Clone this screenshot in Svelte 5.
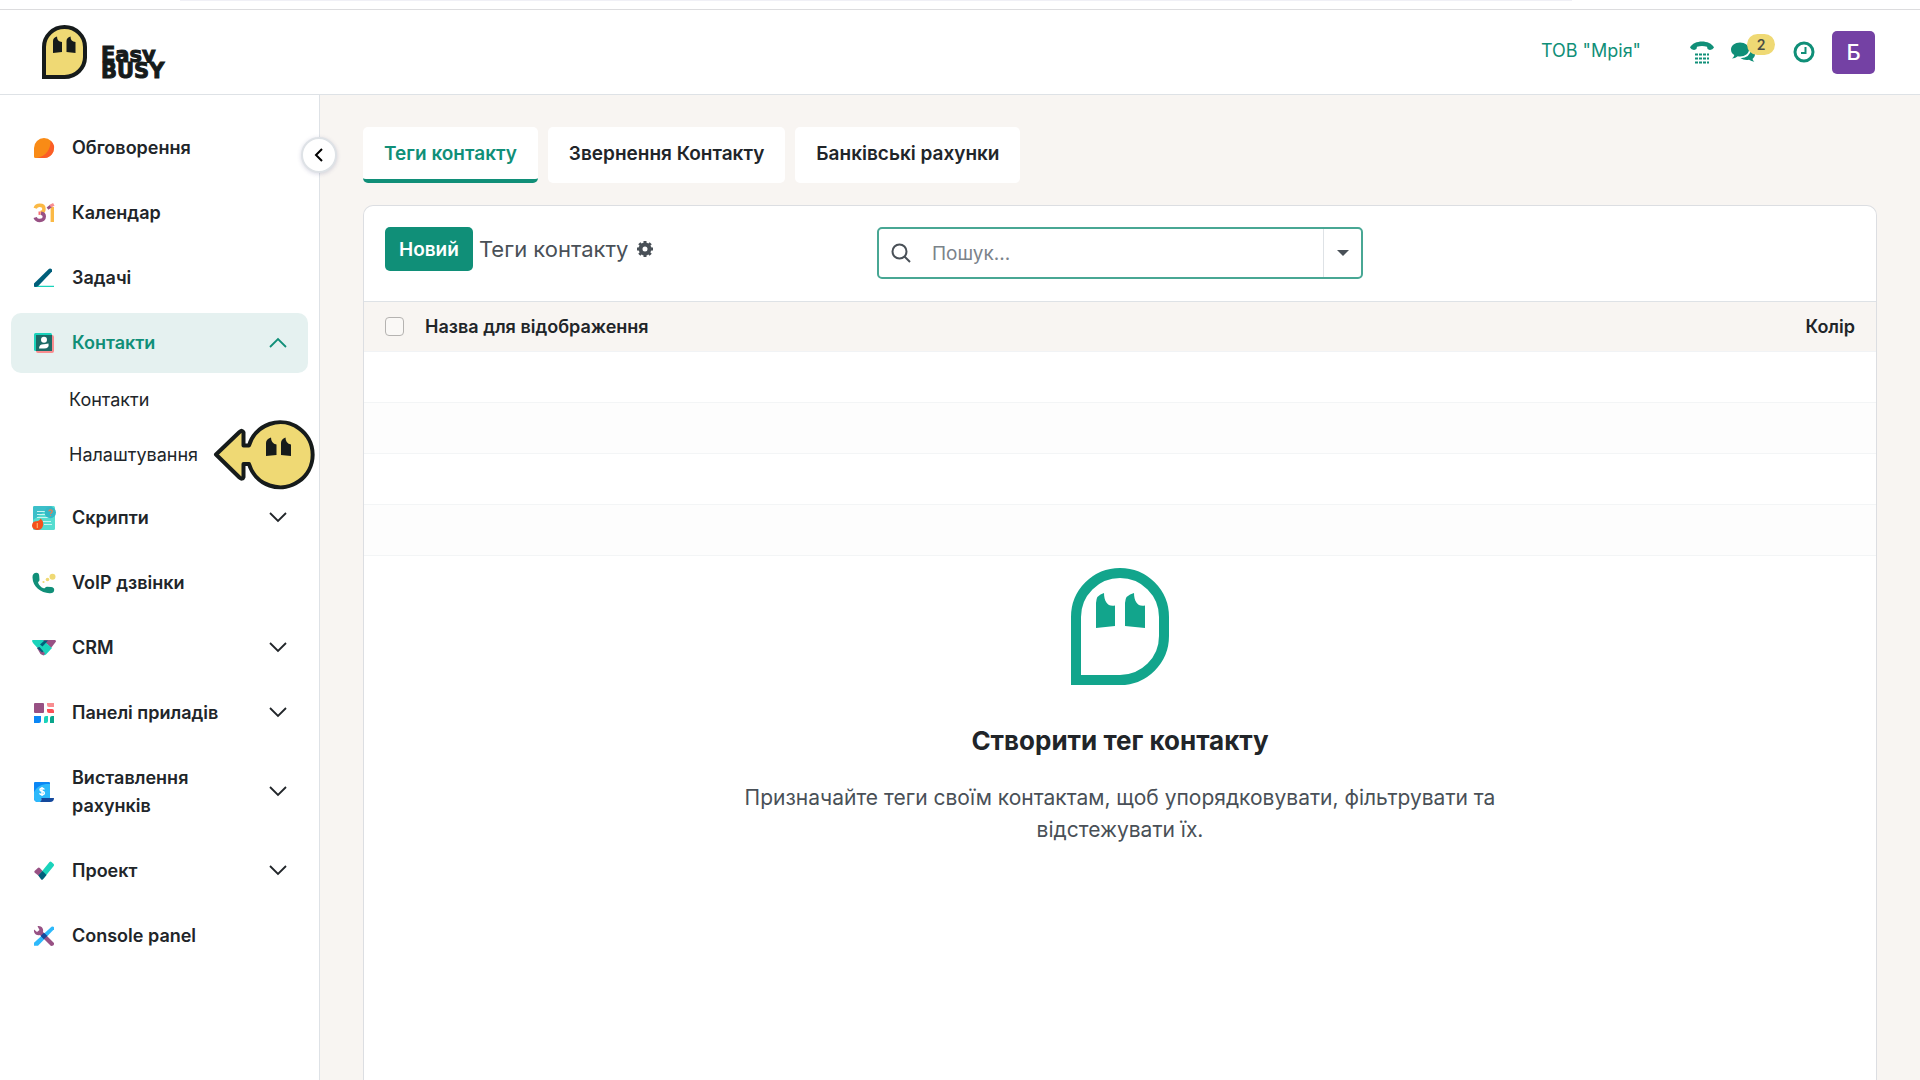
<script>
  let open = $state(true);
  let search = $state("");

  const tabs = ["Теги контакту", "Звернення Контакту", "Банківські рахунки"];
  let activeTab = $state(0);

  const before = [
    { icon: "chat", label: "Обговорення" },
    { icon: "calendar", label: "Календар" },
    { icon: "todo", label: "Задачі" },
  ];

  const after = [
    { icon: "scripts", label: "Скрипти", more: true },
    { icon: "voip", label: "VoIP дзвінки" },
    { icon: "crm", label: "CRM", more: true },
    { icon: "dashboards", label: "Панелі приладів", more: true },
    { icon: "invoices", label: "Виставлення рахунків", more: true },
    { icon: "project", label: "Проект", more: true },
    { icon: "console", label: "Console panel" },
  ];
</script>

{#snippet appIcon(name)}
  <svg class="app-icon" viewBox="0 0 24 24" aria-hidden="true">
    {#if name === "chat"}
      <path d="M2 12a10 10 0 1 1 10 10H3.500Q2 22 2 20.500z" fill="#f98b16" />
      <path d="M18.500 4.400A10 10 0 0 1 12 22H5C14 20 19 13 18.500 4.400z" fill="#fb5d27" />
    {:else if name === "calendar"}
      <g fill="none" stroke-width="3.400">
        <path d="M3.200 7.200C4 4.800 6 4.200 7.700 4.200c2.500 0 4.300 1.400 4.300 3.700 0 2-1.500 3.400-3.500 3.600" stroke="#fbb945" />
        <path d="M6.500 12.200h2" stroke="#f86f70" />
        <path d="M9 12.300c2.200.3 3.300 1.600 3.300 3.300 0 2.400-1.900 3.900-4.500 3.900-2.300 0-4-1-4.700-3" stroke="#985184" />
        <path d="M20.300 6v15" stroke="#fbb945" />
        <path d="M15.500 7.600 19 5" stroke="#985184" stroke-width="3" />
        <path d="M18.300 5.200 21.800 3.400" stroke="#f88d90" stroke-width="3" />
      </g>
    {:else if name === "todo"}
      <path d="M4 19.800h18v1.200H3z" fill="#1ad3bb" />
      <path d="M2 17.500 16.500 3.200q1.700-1.500 3.500.3v2L6 20.300 3.800 21 2 20.700z" fill="#005e7a" />
    {:else if name === "contacts"}
      <rect x="4" y="4" width="18" height="18" rx="2" fill="#f88d90" />
      <rect x="2" y="2" width="18" height="18" rx="1.500" fill="#1ad3bb" />
      <rect x="4" y="4" width="16" height="16" fill="#1b6a66" />
      <circle cx="12" cy="8.700" r="3" fill="#fff" />
      <path d="M7 17.500q0-4.500 5-4.300l4.500-.7q1 5-4.500 5z" fill="#fff" />
    {:else if name === "scripts"}
      <rect x="1" y="0" width="22" height="24" rx="1.500" fill="#55ddd0" />
      <path d="M1 1.500Q1 0 2.500 0h18L1 14z" fill="#3cbfc9" />
      <path d="M5 5.500h8M5 8.500h8M5 11.500h12M11 15.500h8M12 18.500h8" stroke="#c9f5f2" stroke-width="1" />
      <circle cx="18.300" cy="6.500" r="5.700" fill="#35b9c6" />
      <path d="M16.800 5.300q.2-1.500 1.800-1.500t1.700 1.400c0 1.200-1.700 1.300-1.700 2.800M18.500 9v1" fill="none" stroke="#f47b4d" stroke-width="1.200" />
      <path d="M0 19.500c0-3 2.500-4.500 4.500-4.200C6.500 15.300 8 14 8.500 12.500 11 14 11.500 17 11 19.500 10.500 22.500 8 24 5.500 24S0 22.500 0 19.500z" fill="#f4511c" />
      <path d="M5.300 17v5" stroke="#ffb066" stroke-width="1.200" />
    {:else if name === "voip"}
      <path d="M.5 6.500C.3 3.500 2 1.800 4.500 1.800c1.700 0 2.500 1.200 2.700 3L7.500 9c-.1 1.700-1.600 1.600-1.400 2.700.8 2.500 2.900 4.600 5.600 5.600 1.300.3 1.700-1.600 3.300-1.600l4 .4c2.200.2 3.300 1.200 3.200 3-.1 2.600-2 3.400-4.700 3.200C9 21.800.8 16 .5 6.500z" fill="#108f78" />
      <circle cx="20.500" cy="5.700" r="3" fill="#efd974" />
      <circle cx="15.500" cy="8.500" r="1.800" fill="#efd974" />
      <circle cx="11.500" cy="11" r="1.100" fill="#efd974" />
    {:else if name === "crm"}
      <path d="M0 5q0-1 1-1h14v8L5 11.500 1 7z" fill="#1ad3bb" />
      <path d="M11 4h12q1 0 1 1.500L19 12z" fill="#985184" />
      <path d="M5 11.500 14 7l6 5-6 6.500q-2 1.500-4 0z" fill="#1ad3bb" />
      <path d="m5 12 2-1 6 6.500-1.500 2-3-1.500z" fill="#985184" />
      <path d="M8 8.500 12.500 4.500H16l-5.500 6z" fill="#005e7a" />
      <path d="M5.200 12 7.500 11l4 4.500-1.500 1z" fill="#005e7a" />
    {:else if name === "dashboards"}
      <rect x="2" y="2" width="10" height="10" rx="1" fill="#985184" />
      <path d="M15 2h7v4h-5q-2 0-2-2z" fill="#f88d90" />
      <path d="M15 8h5q2 0 2 2v2h-5q-2 0-2-2z" fill="#fc4f57" />
      <path d="M2 15h7v5q0 2-2 2H2z" fill="#0b87f5" />
      <path d="M12 17q0-2 2-2h2v5q0 2-2 2h-2z" fill="#1ad3bb" />
      <path d="M18 17q0-2 2-2h2v7h-4z" fill="#0aa58c" />
    {:else if name === "invoices"}
      <path d="M2 3q0-1 1-1h14q1 0 1 1v16H9l-3 3q-4 0-4-4z" fill="#0b87f5" />
      <path d="M2 12C5 6 11 3.500 18 4v15H9v3H6q-4 0-4-4z" fill="#2db9fb" />
      <path d="M8 22q1.500-1 1.500-4H22q0 4-4 4z" fill="#14489c" />
      <path d="M12.300 9.500q-.5-1.300-2.300-1.300-2 0-2 1.500 0 1.200 2 1.600 2.400.4 2.400 1.800 0 1.600-2.300 1.600-2 0-2.500-1.500M10 7v9" fill="none" stroke="#fff" stroke-width="1.400" />
    {:else if name === "project"}
      <path d="M2.300 12.200 5.800 9q1-.8 2 .1L13.500 15 9.500 19 2.500 13.500z" fill="#985184" />
      <path d="M7 16 17.500 3q1-1 2 0l2.200 2q.8 1 0 2L11.500 19.500 8 18z" fill="#1ad3bb" />
      <path d="m6.300 16.500 4.200-4.500 4 4-3.500 4.300q-1 1-2 0z" fill="#005e7a" />
    {:else if name === "console"}
      <path d="M19.500 2.800q1.500-1 2.500.5v2L6 21.800H2v-3z" fill="#2db9fb" />
      <path d="M2 5.500 5 8 7.500 6 5.500 2.200C9 1.300 12 4.500 11 8L22 19q.5 3-3 3L8 11c-4 1-6.500-2-6-5.500z" fill="#985184" />
      <path d="m12 8.700 3.300 3.400-3.400 3.200L8.600 12z" fill="#14489c" />
    {/if}
  </svg>
{/snippet}

{#snippet chevron(up)}
  <svg class="chevron" viewBox="0 0 18 12" aria-hidden="true">
    <path d={up ? "M1 10 9 2l8 8" : "M1 1l8 8 8-8"} />
  </svg>
{/snippet}

<div class="page">
  <div class="strip"><span></span></div>

  <header>
    <a class="logo" href="/" aria-label="Easy BUSY">
      <svg viewBox="0 0 45 54" aria-hidden="true">
        <path d="M2 22a20.500 20 0 0 1 41 0v9.500a20.500 20 0 0 1-20.500 20.500H2z" fill="#efd974" stroke="#161b1b" stroke-width="4" />
        <path d="M11 28V16q0-3.500 4-4.500 0 5 5 5.500v10zM24.500 27V16q0-3.500 4-4.500 0 5 5 5.500v11z" fill="#161b1b" />
      </svg>
      <span class="wordmark"><span>Easy</span><span>BUSY</span></span>
    </a>

    <nav class="systray" aria-label="Користувач">
      <a class="company" href="#company">ТОВ "Мрія"</a>
      <button class="phone" aria-label="Телефон">
        <svg width="26" height="24" viewBox="0 0 26 24">
          <path d="M1 7.500C3 3.500 8 1.500 13 1.500S23 3.500 25 7.500q-1.500 2.800-5 2.300-2-.5-2-3Q13 5 8 6.800q0 2.500-2 3Q2.500 10.300 1 7.500z" />
          <path d="M6 14.500h14M6 18.500h14M6 22.500h14" class="keys" />
        </svg>
      </button>
      <button class="messages" aria-label="Повідомлення">
        <svg width="26" height="22" viewBox="0 0 26 22">
          <path d="M10 1.500c5 0 9 3 9 7s-4 7-9 7q-1 0-2.200-.2Q5 17.500 2 17.500q2-1.500 2.300-3.500Q1 12 1 8.500c0-4 4-7 9-7z" />
          <path d="M21 8q4 2.500 4 6-.5 2.500-2.500 4 .5 1.500 1.800 2.800-3-.3-5.300-2-5 .8-8.500-1.600Q20 17 21 8z" />
        </svg>
        <span class="badge">2</span>
      </button>
      <button class="clock" aria-label="Активності">
        <svg width="22" height="22" viewBox="0 0 22 22">
          <circle cx="11" cy="11" r="9" />
          <path d="M12.500 6v6H8" />
        </svg>
      </button>
      <button class="avatar">Б</button>
    </nav>
  </header>

  <div class="body">
    <aside>
      <nav class="menu" aria-label="Головне меню">
        {#each before as item}
          <a class="item" href="#{item.icon}">
            {@render appIcon(item.icon)}
            <span>{item.label}</span>
          </a>
        {/each}

        <button class="item active" aria-expanded={open} onclick={() => (open = !open)}>
          {@render appIcon("contacts")}
          <span>Контакти</span>
          {@render chevron(open)}
        </button>

        {#if open}
          <div class="submenu">
            <a href="#contacts">Контакти</a>
            <a href="#settings">
              Налаштування
              <svg class="pointer" width="102" height="72" viewBox="0 -1 102 72" aria-hidden="true">
                <path
                  d="M4 35.500 27.500 13q3-2.500 4 .5V26.500h5.500a32.500 32.500 0 1 1 0 18.500h-5.500V58q-1 3-4 .5z"
                  fill="#efd974"
                  stroke="#161b1b"
                  stroke-width="4"
                  stroke-linejoin="round"
                />
                <path d="M54 37V24q0-4 5-5.500 0 6 5.500 7v10.500zM69 36V24q0-4 4.500-5.500 0 6 5.500 7v11.500z" fill="#161b1b" />
              </svg>
            </a>
          </div>
        {/if}

        {#each after as item}
          <a class="item" href="#{item.icon}">
            {@render appIcon(item.icon)}
            <span>{item.label}</span>
            {#if item.more}{@render chevron(false)}{/if}
          </a>
        {/each}
      </nav>

      <button class="collapse" aria-label="Згорнути меню">
        <svg width="10" height="16" viewBox="0 0 10 16"><path d="M8 2 2 8l6 6" /></svg>
      </button>
    </aside>

    <main>
      <div class="tabs" role="tablist">
        {#each tabs as tab, i}
          <button role="tab" aria-selected={activeTab === i} class:selected={activeTab === i} onclick={() => (activeTab = i)}>
            {tab}
          </button>
        {/each}
      </div>

      <section class="card">
        <div class="toolbar">
          <div class="crumbs">
            <button class="primary">Новий</button>
            <span>Теги контакту</span>
            <button class="gear" aria-label="Дії">
              <svg width="16" height="16" viewBox="0 0 16 16">
                <circle cx="8" cy="8" r="4.500" />
                <path d="M8 0v3M8 13v3M0 8h3M13 8h3M2.300 2.300l2.200 2.200M11.500 11.500l2.200 2.200M2.300 13.700l2.200-2.200M11.500 4.500l2.200-2.200" />
              </svg>
            </button>
          </div>

          <div class="search">
            <svg width="20" height="20" viewBox="0 0 20 20" aria-hidden="true">
              <circle cx="8.500" cy="8.500" r="7" />
              <path d="m13.500 13.500 5.500 5.500" />
            </svg>
            <input type="text" placeholder="Пошук..." aria-label="Пошук" bind:value={search} />
            <button aria-label="Фільтри">
              <svg width="12" height="6" viewBox="0 0 12 6"><path d="M0 0h12L6 6z" /></svg>
            </button>
          </div>
        </div>

        <table>
          <thead>
            <tr>
              <th class="check"><input type="checkbox" aria-label="Вибрати всі" /></th>
              <th>Назва для відображення</th>
              <th class="color">Колір</th>
            </tr>
          </thead>
          <tbody>
            {#each Array(4) as _}
              <tr><td colspan="3"></td></tr>
            {/each}
          </tbody>
        </table>

        <div class="empty">
          <svg width="98" height="117" viewBox="0 0 98 117" aria-hidden="true">
            <path d="M5 49a44 44 0 0 1 88 0v19a44 44 0 0 1-44 44H5z" fill="none" stroke="#12a58c" stroke-width="10" />
            <path
              d="M25 60V35q0-8 8-10c0 9 4 14 11 12.500V58zM54 58V35q0-8 9-10c0 9 4 14 11 12.500V60z"
              fill="#12a58c"
            />
          </svg>
          <h2>Створити тег контакту</h2>
          <p>Призначайте теги своїм контактам, щоб упорядковувати, фільтрувати та відстежувати їх.</p>
        </div>
      </section>
    </main>
  </div>
</div>

<style>
  :global(body) {
    margin: 0;
    background: #f8f5f2;
  }

  .page {
    display: flex;
    flex-direction: column;
    height: 100vh;
    overflow: hidden;
    font-family: Inter, "Noto Sans", sans-serif;
    font-size: 18px;
    color: #212529;
  }

  .page * {
    box-sizing: border-box;
  }

  button {
    font: inherit;
    color: inherit;
    background: none;
    border: none;
    padding: 0;
    cursor: pointer;
  }

  a {
    color: inherit;
    text-decoration: none;
  }

  svg {
    display: block;
    flex: none;
  }

  .strip {
    flex: none;
    height: 10px;
    padding: 0 348px 0 180px;
    background: #fff;
    border-bottom: 1px solid #dcdcde;
  }

  .strip span {
    display: block;
    height: 1px;
    background: #f0f0f6;
  }

  header {
    flex: none;
    display: flex;
    align-items: center;
    justify-content: space-between;
    height: 85px;
    padding: 0 45px 0 42px;
    background: #fff;
    border-bottom: 1px solid #dee2e6;
  }

  .logo {
    display: flex;
    align-items: flex-end;
    gap: 14px;
  }

  .logo svg {
    width: 45px;
    height: 54px;
  }

  .wordmark {
    font: 700 21px/16px "DejaVu Sans", Inter, sans-serif;
    color: #161b1b;
    -webkit-text-stroke: 1px #161b1b;
  }

  .wordmark span {
    display: block;
  }

  /* the second line sits over the descender of the first */
  .wordmark span + span {
    position: relative;
    background: #fff;
  }

  .systray {
    display: flex;
    align-items: center;
    color: #108f78;
    fill: #108f78;
  }

  .company {
    margin-right: 48px;
    padding-bottom: 4px;
  }

  .phone {
    margin-right: 15px;
  }

  .keys {
    fill: none;
    stroke: #108f78;
    stroke-width: 2;
    stroke-dasharray: 3 1;
  }

  .messages {
    position: relative;
    margin-right: 37px;
  }

  .badge {
    position: absolute;
    top: -7px;
    left: 17px;
    width: 28px;
    border-radius: 11px;
    background: #efd974;
    color: #4a4d45;
    font-size: 14px;
    font-weight: 600;
    line-height: 21px;
  }

  .clock {
    margin-right: 17px;
  }

  .clock svg {
    fill: none;
    stroke: #108f78;
    stroke-width: 3;
  }

  .clock path {
    stroke-width: 2;
  }

  .avatar {
    width: 43px;
    height: 43px;
    border-radius: 5px;
    background: #7441a4;
    color: #fff;
    font-size: 22px;
    font-weight: 500;
  }

  .body {
    flex: 1;
    display: flex;
    min-height: 0;
  }

  aside {
    position: relative;
    flex: none;
    width: 320px;
    padding: 23px 11px;
    background: #fff;
    border-right: 1px solid #dee2e6;
  }

  .menu {
    display: flex;
    flex-direction: column;
    gap: 5px;
  }

  .item {
    display: flex;
    align-items: center;
    gap: 16px;
    min-height: 60px;
    padding: 16px 21px;
    border-radius: 10px;
    font-weight: 600;
    line-height: 28px;
    text-align: left;
  }

  .item span {
    flex: 1;
  }

  .item.active {
    background: #e5f1f0;
    color: #108f78;
  }

  .app-icon {
    width: 24px;
    height: 24px;
  }

  .chevron {
    width: 18px;
    height: 12px;
    fill: none;
    stroke: currentColor;
    stroke-width: 1.8;
  }

  .submenu {
    display: flex;
    flex-direction: column;
    gap: 9px;
    margin-top: -2px;
    padding-bottom: 6px;
  }

  .submenu a {
    display: flex;
    align-items: center;
    gap: 14px;
    height: 46px;
    padding-left: 58px;
  }

  .pointer {
    overflow: visible;
    margin-right: -16px;
  }

  .collapse {
    position: absolute;
    top: 42px;
    right: -18px;
    display: grid;
    place-items: center;
    width: 36px;
    height: 36px;
    border: 2px solid #dee2e6;
    border-radius: 50%;
    background: #fff;
    box-shadow: 0 1px 4px rgba(60, 60, 120, 0.2);
  }

  .collapse path {
    fill: none;
    stroke: #000;
    stroke-width: 2;
  }

  main {
    flex: 1;
    display: flex;
    flex-direction: column;
    min-width: 0;
    padding: 32px 43px 0;
  }

  .tabs {
    display: flex;
    gap: 10px;
    margin-bottom: 22px;
  }

  .tabs button {
    height: 56px;
    padding: 0 21px;
    border-bottom: 4px solid transparent;
    border-radius: 5px;
    background: #fff;
    font-size: 19px;
    font-weight: 600;
  }

  .tabs .selected {
    border-bottom-color: #108f78;
    color: #108f78;
  }

  .card {
    flex: 1;
    border: 1px solid #dcdee2;
    border-bottom: none;
    border-radius: 10px 10px 0 0;
    background: #fff;
  }

  .toolbar {
    display: grid;
    grid-template-columns: 1fr 486px 1fr;
    align-items: start;
    padding: 21px 21px 22px;
    border-bottom: 1px solid #dee2e6;
  }

  .crumbs {
    display: flex;
    align-items: center;
    gap: 6px;
    font-size: 22px;
    color: #495057;
  }

  .primary {
    height: 44px;
    padding: 0 14px;
    border-radius: 5px;
    background: #108f78;
    color: #fff;
    font-size: 19px;
    font-weight: 600;
  }

  .gear {
    margin-left: 3px;
  }

  .gear svg {
    fill: none;
    stroke: #495057;
    stroke-width: 4;
  }

  .gear path {
    stroke-width: 3;
  }

  .search {
    display: flex;
    align-items: center;
    height: 52px;
    padding-left: 12px;
    border: 2px solid #48a794;
    border-radius: 5px;
  }

  .search > svg {
    fill: none;
    stroke: #495057;
    stroke-width: 2;
  }

  .search input {
    flex: 1;
    min-width: 0;
    padding: 0 21px;
    border: none;
    outline: none;
    background: none;
    font: inherit;
    font-size: 19px;
    color: inherit;
  }

  .search input::placeholder {
    color: #7b838a;
  }

  .search button {
    display: grid;
    place-items: center;
    align-self: stretch;
    width: 38px;
    border-left: 1px solid #dee2e6;
    fill: #495057;
  }

  table {
    width: 100%;
    border-collapse: separate;
    border-spacing: 0;
  }

  th {
    height: 50px;
    padding: 0;
    background: #f8f5f2;
    border-bottom: 1px solid #f1f3f5;
    font-weight: 600;
    text-align: left;
  }

  .check {
    width: 61px;
    padding-left: 21px;
  }

  .check input {
    display: block;
    appearance: none;
    width: 19px;
    height: 19px;
    margin: 0;
    border: 1px solid #b5b3b1;
    border-radius: 4px;
    background: #faf8f6;
  }

  .color {
    padding-right: 21px;
    text-align: right;
  }

  td {
    height: 51px;
    padding: 0;
    border-bottom: 1px solid #f3f5f6;
  }

  tbody tr:nth-child(even) td {
    background: #fdfdfd;
  }

  .empty {
    display: flex;
    flex-direction: column;
    align-items: center;
    padding-top: 12px;
    text-align: center;
  }

  .empty h2 {
    margin: 38px 0 23px;
    font-size: 26px;
    font-weight: 700;
    line-height: 36px;
  }

  .empty p {
    width: 800px;
    max-width: 100%;
    margin: 0;
    font-size: 21px;
    line-height: 32px;
    color: #495057;
  }
</style>
